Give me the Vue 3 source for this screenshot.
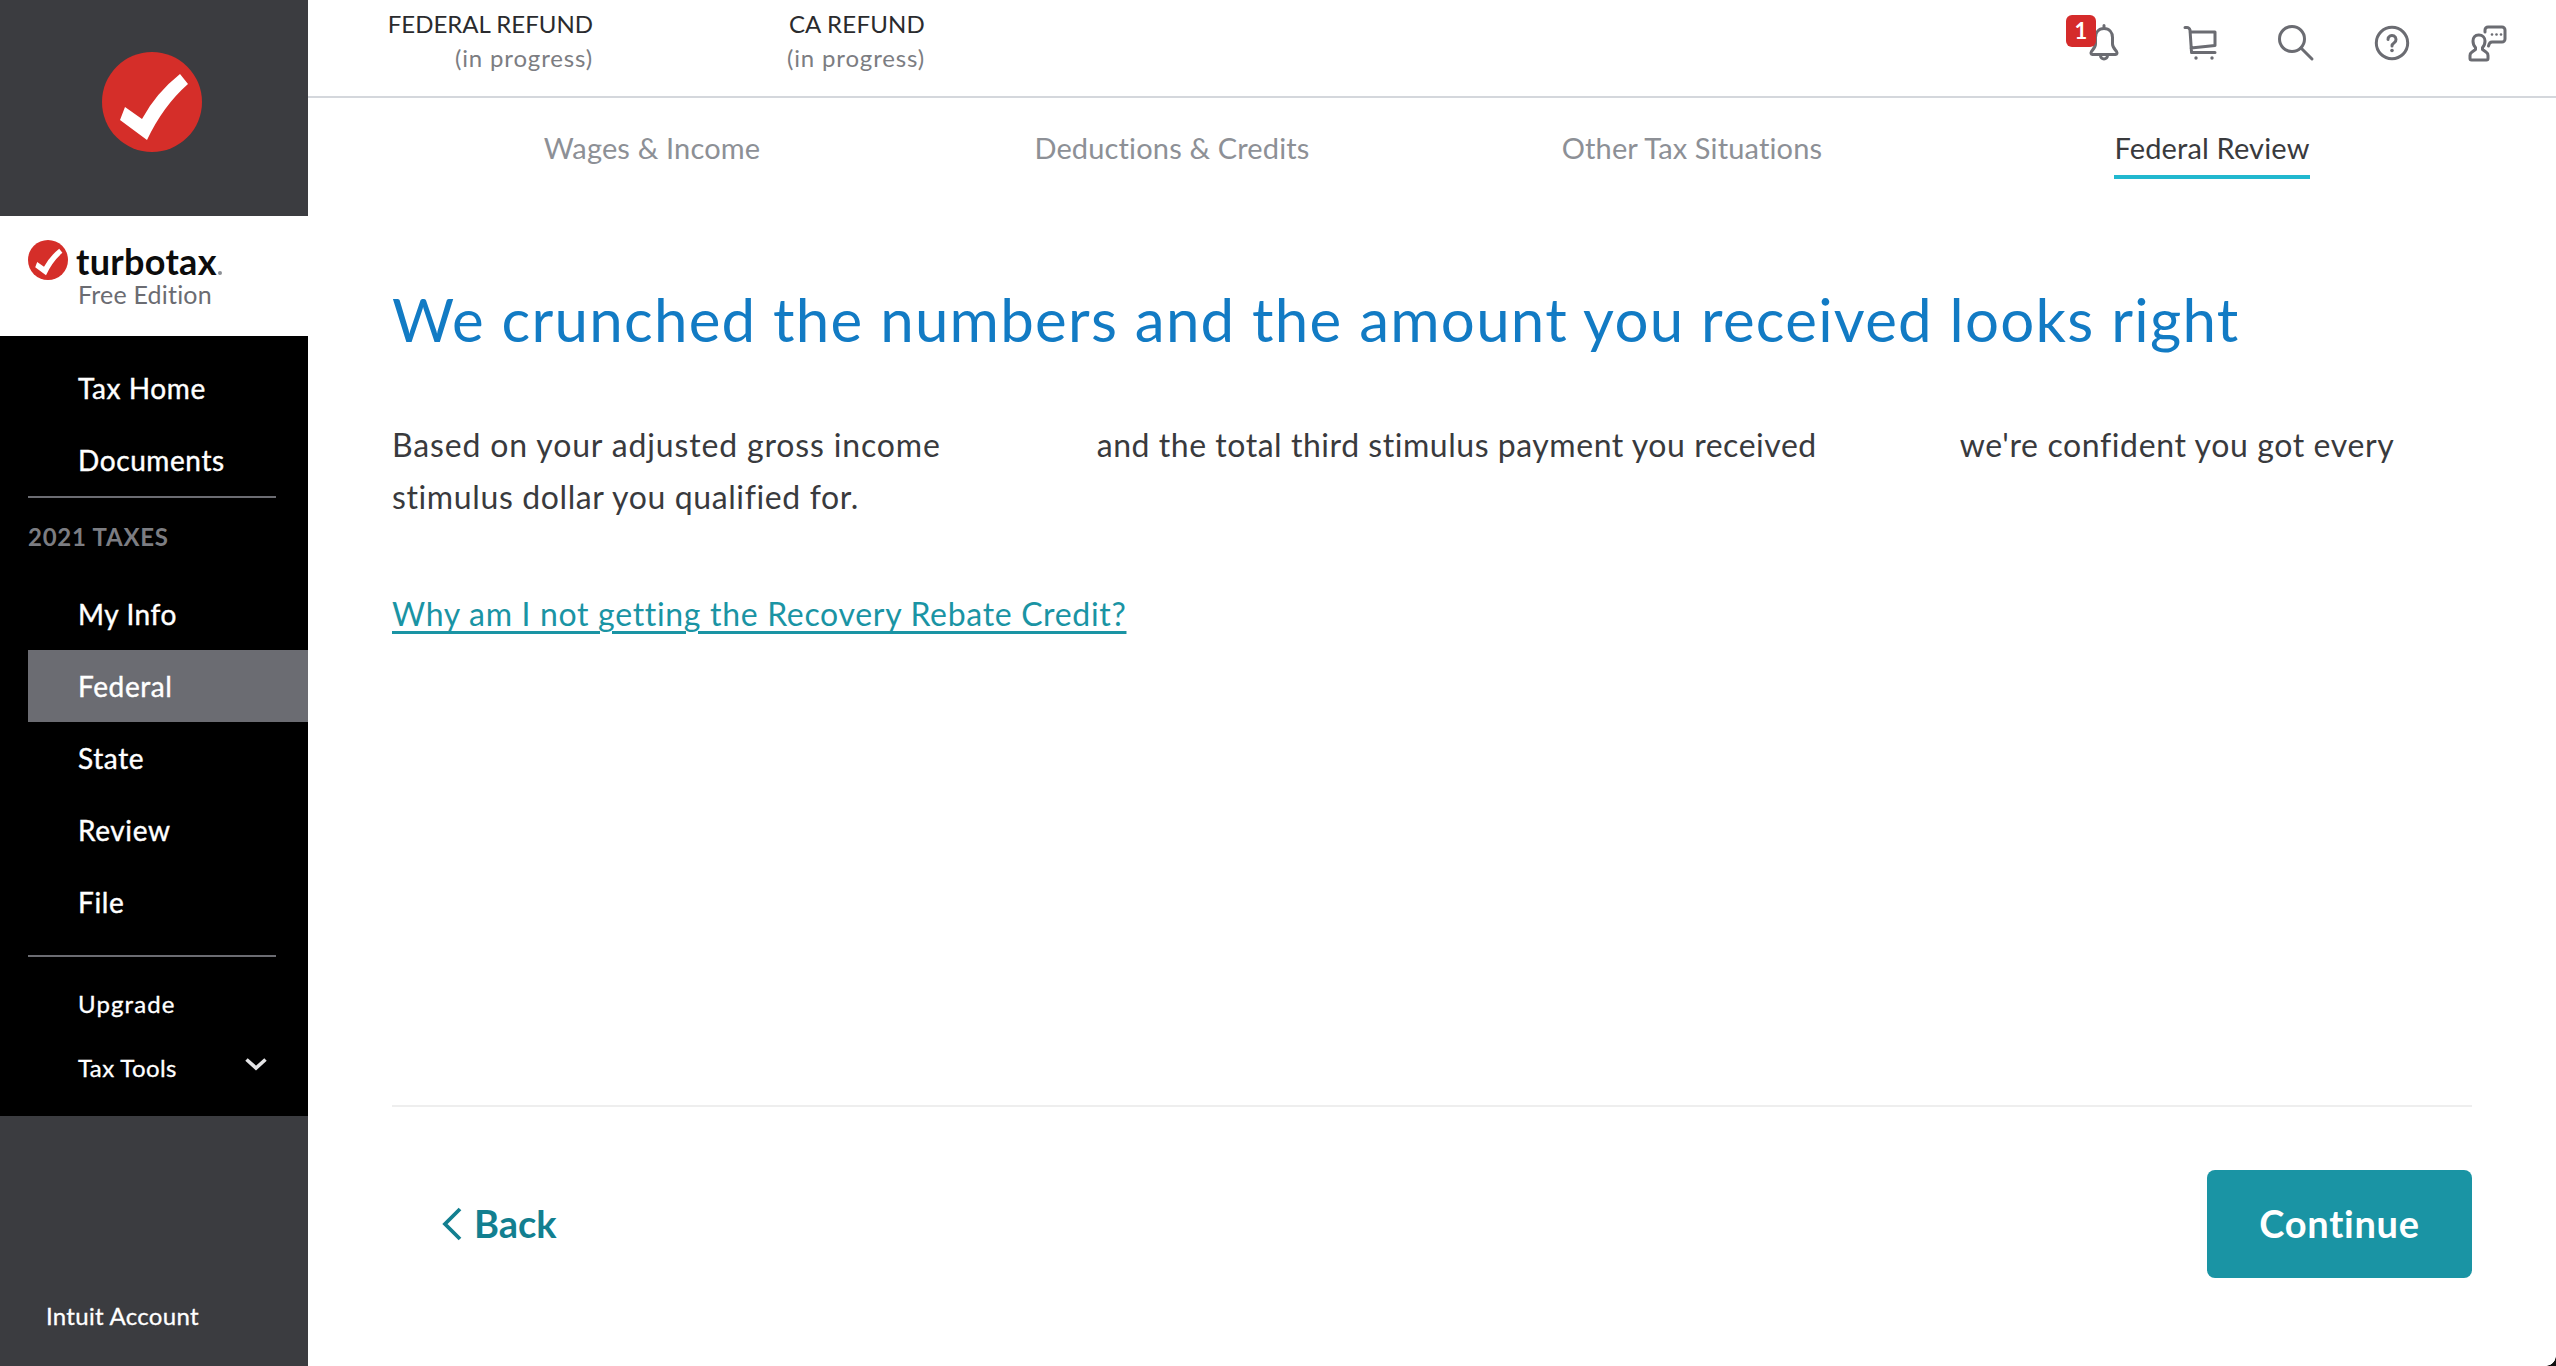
<script setup>
const navTop = ['Tax Home', 'Documents']
const navTax = ['My Info', 'Federal', 'State', 'Review', 'File']
const tabs = ['Wages & Income', 'Deductions & Credits', 'Other Tax Situations', 'Federal Review']
</script>

<template>
  <div class="page">
    <aside class="side">
      <div class="brand">
        <svg class="check-big" viewBox="0 0 100 100"><circle cx="50" cy="50" r="50" fill="#d52e29"/><path d="M18 68L23 55L40 67Q54 41 78 22L86 32Q61 54 45 88Z" fill="#fff"/></svg>
      </div>
      <div class="logo">
        <div class="logo-row">
          <svg class="check-small" viewBox="0 0 100 100"><circle cx="50" cy="50" r="50" fill="#d52e29"/><path d="M18 68L23 55L40 67Q54 41 78 22L86 32Q61 54 45 88Z" fill="#fff"/></svg>
          <span class="wordmark">turbotax<i class="tm"></i></span>
        </div>
        <div class="edition">Free Edition</div>
      </div>
      <nav class="nav">
        <a v-for="n in navTop" :key="n" class="item">{{ n }}</a>
        <div class="rule first"></div>
        <div class="year">2021 TAXES</div>
        <a v-for="n in navTax" :key="n" class="item" :class="{ active: n === 'Federal' }">{{ n }}</a>
        <div class="rule second"></div>
        <a class="small up">Upgrade</a>
        <a class="small tools">Tax Tools
          <svg class="chev" viewBox="0 0 24 14"><path d="M2.5 2.5L12 11L21.5 2.5" fill="none" stroke="#e4e4e6" stroke-width="3.6"/></svg>
        </a>
      </nav>
      <div class="side-foot"><span>Intuit Account</span></div>
    </aside>

    <main class="main">
      <header class="top">
        <div class="refund fed"><span class="r1">FEDERAL REFUND</span><span class="r2">(in progress)</span></div>
        <div class="refund ca"><span class="r1 wide">CA REFUND</span><span class="r2">(in progress)</span></div>
        <div class="icons">
          <div class="bell-wrap">
            <span class="badge">1</span>
            <svg class="ico" viewBox="0 0 40 40"><path d="M20 5.500c-5.500 0-8.500 4-8.500 9v6.500c0 3-2 5-4 7.500-1 1.500-.5 3 1 3h23c1.500 0 2-1.500 1-3-2-2.500-4-4.500-4-7.500v-6.500c0-5-3-9-8.500-9zM20 2.500v3M16.500 32.500a3.500 3.500 0 0 0 7 0"/></svg>
          </div>
          <svg class="ico" viewBox="0 0 40 40"><path d="M5 4.500h2c1.500 0 2.500 1 3 2.500l1.500 22M10 9h25v13.500l-24 2.500M11.500 29.500H35"/><circle class="dot" cx="16" cy="35" r="1.700"/><circle class="dot" cx="32" cy="35" r="1.700"/></svg>
          <svg class="ico" viewBox="0 0 40 40"><circle cx="16" cy="16" r="12.500"/><path d="M25 25L36 36"/></svg>
          <svg class="ico" viewBox="0 0 40 40"><circle cx="20" cy="20" r="15.700"/><path d="M16 16.500a4 4 0 1 1 6.200 3.300c-1.500 1-2.200 1.700-2.200 3.200"/><circle class="dot" cx="20" cy="27.500" r="1.800"/></svg>
          <svg class="ico" viewBox="0 0 40 40"><path d="M17 9V7a3 3 0 0 1 3-3h14a3 3 0 0 1 3 3v9a3 3 0 0 1-3 3h-10c-2 0-3 1.500-3.500 4"/><circle class="dot" cx="24" cy="11.500" r="1.300"/><circle class="dot" cx="28.500" cy="11.500" r="1.300"/><circle class="dot" cx="33" cy="11.500" r="1.300"/><path d="M10.500 12c-3.500 0-5.500 2.700-5.500 6 0 3 1 5 2.500 6.500v2L4 29c-1.500 1-2 2-2 3.500v3c0 1 .5 1.500 1.500 1.500h15c1 0 1.500-.5 1.500-1.500v-3c0-1.500-.5-2.500-2-3.500l-3.500-2.500v-2c1.500-1.500 2.500-3.500 2.500-6.500 0-3.300-2.500-6-6-6z"/></svg>
        </div>
      </header>

      <div class="tabs">
        <div v-for="t in tabs" :key="t" class="tab"><span :class="{ on: t === 'Federal Review' }">{{ t }}</span></div>
      </div>

      <section class="content">
        <h1>We crunched the numbers and the amount you received looks right</h1>
        <p><span class="s1">Based on your adjusted gross income</span><span class="gap g1"></span><span class="s2">and the total third stimulus payment you received</span><span class="gap g2"></span>we're confident you got every stimulus dollar you qualified for.</p>
        <a class="why">Why am I not getting the Recovery Rebate Credit?</a>
      </section>

      <footer class="foot">
        <a class="back">
          <svg class="back-chev" viewBox="0 0 20 34"><path d="M18 2L3 17L18 32" fill="none" stroke="#127f90" stroke-width="3.800"/></svg>
          Back
        </a>
        <button class="cont">Continue</button>
      </footer>
    </main>
    <div class="corner"></div>
  </div>
</template>

<style scoped>
.page { position: relative; display: flex; width: 2556px; height: 1366px; overflow: hidden; background: #fff; font-family: Lato, "Liberation Sans", sans-serif; color: #393a3d; }
.side { width: 308px; flex: none; display: flex; flex-direction: column; }
.brand { height: 216px; background: #3b3c40; display: flex; align-items: center; justify-content: center; }
.check-big { width: 100px; height: 100px; margin-top: -12px; margin-left: -4px; }
.logo { height: 120px; background: #fff; padding: 24px 0 0 28px; box-sizing: border-box; }
.logo-row { display: flex; align-items: center; height: 40px; }
.check-small { width: 40px; height: 40px; }
.wordmark { margin-left: 8px; font-size: 36px; font-weight: 700; color: #0c0c0c; line-height: 40px; position: relative; top: 1px; letter-spacing: .3px; }
.tm { display: inline-block; width: 4px; height: 4px; border-radius: 50%; background: #8d9096; margin-left: 1px; }
.edition { margin: -1px 0 0 50px; font-size: 25px; letter-spacing: .2px; line-height: 30px; color: #6b6c72; }
.nav { height: 780px; background: #000; display: flex; flex-direction: column; padding-top: 16px; box-sizing: border-box; }
.item { display: block; height: 72px; line-height: 72px; margin-left: 28px; padding-left: 50px; font-size: 28px; font-weight: 400; letter-spacing: .6px; color: #fff; -webkit-text-stroke: .4px #fff; }
.item.active { background: #6b6c72; }
.rule { height: 2px; margin-left: 28px; width: 248px; background: #6b6c72; }
.first { margin-top: 0; }
.second { margin-top: 17px; }
.year { margin: 17px 0 0 28px; height: 44px; line-height: 44px; font-size: 24px; font-weight: 700; letter-spacing: .75px; color: #7c7d82; margin-bottom: 19px; }
.small { display: block; margin-left: 78px; font-size: 24px; font-weight: 400; letter-spacing: .4px; color: #fff; line-height: 30px; -webkit-text-stroke: .3px #fff; }
.up { margin-top: 32px; letter-spacing: 1.1px; }
.tools { margin-top: 34px; position: relative; }
.chev { position: absolute; left: 166px; top: 4px; width: 24px; height: 14px; }
.side-foot { flex: 1; background: #3b3c40; display: flex; align-items: flex-end; padding: 0 0 35px 46px; color: #fff; font-size: 24px; letter-spacing: .3px; line-height: 30px; -webkit-text-stroke: .3px #fff; }

.main { flex: 1; display: flex; flex-direction: column; min-width: 0; }
.top { height: 98px; box-sizing: border-box; border-bottom: 2px solid #d4d7dc; position: relative; display: flex; padding-top: 7px; }
.refund { display: flex; flex-direction: column; align-items: flex-end; font-size: 24px; line-height: 34px; }
.fed { margin-left: 81px; width: 204px; }
.ca { margin-left: 196px; width: 136px; }
.r1 { color: #2a2b2e; white-space: nowrap; }
.wide { letter-spacing: .2px; }
.r2 { color: #7c7d82; white-space: nowrap; letter-spacing: .85px; }
.icons { position: absolute; left: 1776px; top: 23px; display: flex; gap: 56px; }
.bell-wrap { position: relative; width: 40px; height: 40px; }
.ico { width: 40px; height: 40px; display: block; fill: none; stroke: #6b6c72; stroke-width: 3; stroke-linecap: round; stroke-linejoin: round; }
.dot { fill: #6b6c72; stroke: none; }
.badge { position: absolute; left: -18px; top: -8px; width: 30px; height: 32px; border-radius: 6px; background: #d52b2b; color: #fff; font-size: 22px; font-weight: 700; line-height: 32px; text-align: center; }

.tabs { display: grid; grid-template-columns: repeat(4, 520px); margin-left: 84px; height: 82px; }
.tab { display: flex; justify-content: center; padding-top: 31px; font-size: 29px; letter-spacing: .15px; color: #8d9096; }
.tab span { line-height: 38px; white-space: nowrap; }
.tab .on { color: #393a3d; border-bottom: 4px solid #21b8cf; height: 50px; box-sizing: border-box; }

.content { flex: 1; margin: 0 84px; }
h1 { margin: 0; padding-top: 101px; font-size: 60px; letter-spacing: 1.26px; line-height: 76px; font-weight: 400; color: #127bc4; white-space: nowrap; }
p { margin: 62px 0 0; font-size: 32px; letter-spacing: .62px; line-height: 52px; color: #393a3d; }
.s1 { letter-spacing: .85px; }
.s2 { letter-spacing: .54px; }
.gap { display: inline-block; }
.g1 { width: 156px; }
.g2 { width: 143px; }
.why { display: inline-block; margin-top: 65px; font-size: 32px; letter-spacing: .68px; line-height: 52px; color: #1a94a4; text-decoration: underline; text-decoration-thickness: 3px; text-underline-offset: 5px; }

.foot { margin: 0 84px; height: 261px; box-sizing: border-box; border-top: 2px solid #eeeeee; display: flex; justify-content: space-between; align-items: flex-start; padding-top: 63px; }
.back { display: flex; align-items: center; height: 106px; margin-left: 50px; font-size: 38px; font-weight: 700; color: #127f90; gap: 12px; }
.back-chev { width: 20px; height: 34px; margin-top: 2px; }
.cont { width: 265px; height: 108px; border: 0; border-radius: 8px; background: #1a94a4; color: #fff; font-family: inherit; font-size: 38px; font-weight: 700; letter-spacing: .7px; padding: 0 0 3px; }
.corner { position: absolute; right: 0; bottom: 0; width: 10px; height: 10px; background: radial-gradient(circle at 0 0, transparent 9.5px, #111 10px); }
</style>
